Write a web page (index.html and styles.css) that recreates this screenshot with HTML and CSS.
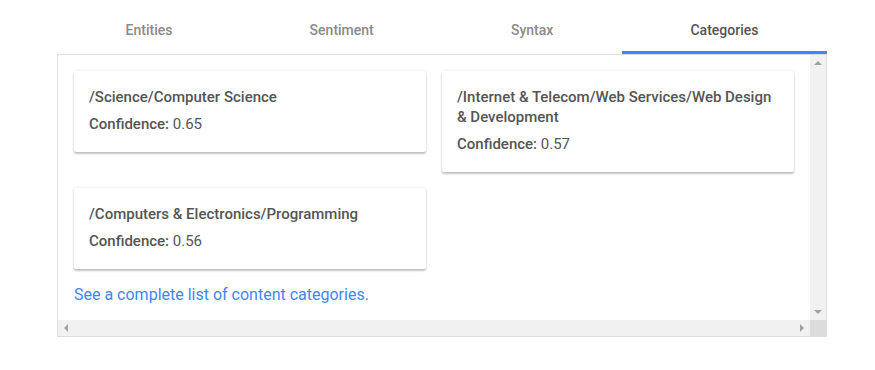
FILE: index.html
```html
<!DOCTYPE html>
<html>
<head>
    <title>Categories</title>
    <link rel="stylesheet" href="styles.css">
</head>
<body>
    <div class="panel">
        <div class="tabs">
            <div class="tab">Entities</div>
            <div class="tab">Sentiment</div>
            <div class="tab">Syntax</div>
            <div class="tab active">Categories</div>
        </div>
        <div class="box">
            <div class="content">
                <div class="cards">
                    <div class="card">
                        <div class="card-title">/Science/Computer Science</div>
                        <div class="card-line"><b>Confidence:</b> 0.65</div>
                    </div>
                    <div class="card">
                        <div class="card-title">/Internet &amp; Telecom/Web Services/Web Design &amp; Development</div>
                        <div class="card-line"><b>Confidence:</b> 0.57</div>
                    </div>
                    <div class="card">
                        <div class="card-title">/Computers &amp; Electronics/Programming</div>
                        <div class="card-line"><b>Confidence:</b> 0.56</div>
                    </div>
                </div>
                <a class="more" href="#">See a complete list of content categories.</a>
            </div>
            <div class="vbar">
                <span class="arrow up"></span>
                <span class="arrow down"></span>
            </div>
            <div class="hbar">
                <span class="arrow left"></span>
                <span class="arrow right"></span>
            </div>
            <div class="corner"></div>
        </div>
    </div>
</body>
</html>
```

FILE: styles.css
```css
body {
  margin: 0;
  padding: 0;
  font-family: Roboto, Arial, sans-serif;
  background-color: #ffffff;
}

.panel {
  width: 770px;
  margin-left: 57px;
}

.tabs {
  display: flex;
}

.tab {
  flex: 1 1 auto;
  text-align: center;
  padding-top: 20px;
  height: 31px;
  line-height: 20px;
  font-size: 14px;
  font-weight: 500;
  color: #8a8a8a;
  border-bottom: 3px solid transparent;
}

.tab.active {
  color: #555555;
  border-bottom-color: #4285f4;
}

.box {
  display: grid;
  grid-template-columns: 1fr 16px;
  grid-template-rows: 265px 16px;
  border: 1px solid #dddddd;
}

.content {
  padding: 16px;
  overflow: hidden;
}

.cards {
  display: flex;
  flex-wrap: wrap;
  align-items: flex-start;
  gap: 16px 16px;
}

.card {
  width: 352px;
  box-sizing: border-box;
  padding: 16px 15px 18px;
  border-radius: 2px;
  background-color: #ffffff;
  box-shadow: 0 2px 2px rgba(0, 0, 0, 0.22), 0 0 3px rgba(0, 0, 0, 0.1);
  color: #555555;
  font-size: 15px;
  line-height: 20px;
}

.card-title {
  font-weight: 500;
  margin-bottom: 7px;
}

.card-line b {
  font-weight: 500;
}

.more {
  display: block;
  margin-top: 16px;
  font-size: 16px;
  line-height: 20px;
  color: #4285f4;
  text-decoration: none;
}

.vbar,
.hbar {
  background-color: #f1f1f1;
  display: flex;
  justify-content: space-between;
  align-items: center;
}

.vbar {
  flex-direction: column;
  padding: 6px 0;
}

.hbar {
  padding: 0 6px;
}

.corner {
  background-color: #dcdcdc;
}

.arrow {
  width: 0;
  height: 0;
  border: 4px solid transparent;
}

.arrow.up {
  border-bottom-color: #a3a3a3;
  border-top-width: 0;
}

.arrow.down {
  border-top-color: #a3a3a3;
  border-bottom-width: 0;
}

.arrow.left {
  border-right-color: #a3a3a3;
  border-left-width: 0;
}

.arrow.right {
  border-left-color: #a3a3a3;
  border-right-width: 0;
}
```
